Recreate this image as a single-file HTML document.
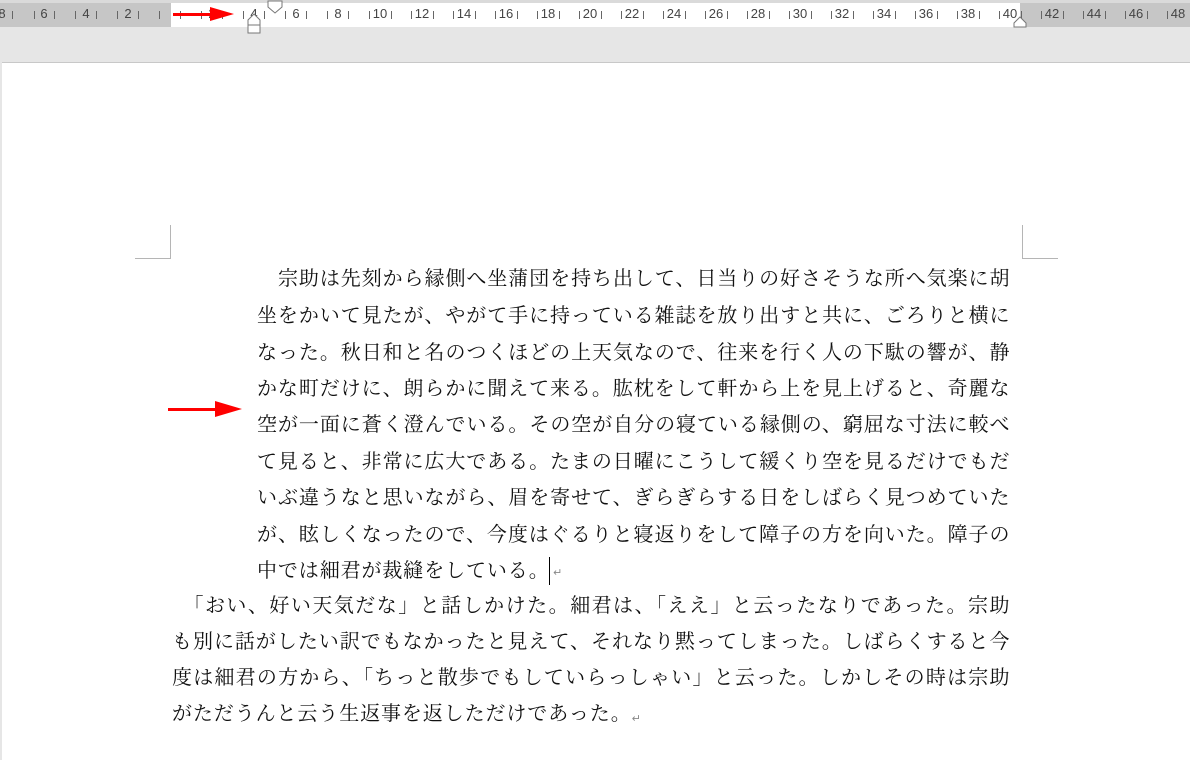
<!DOCTYPE html><html><head><meta charset="utf-8"><style>
body{margin:0;width:1190px;height:759px;overflow:hidden;background:#e6e6e6;position:relative;font-family:"Liberation Serif","Noto Serif CJK JP",serif}
.rl{position:absolute;top:3px;height:24px}
.n{position:absolute;top:6px;font:13px "Liberation Sans",sans-serif;color:#444;transform:translateX(-50%)}
.t{position:absolute;top:11px;width:1px;height:8px;background:#666}
#page{position:absolute;left:2px;top:62px;width:1188px;height:697px;background:#fff;border-top:1px solid #c8c8c8}
.l{position:absolute;font-size:20px;line-height:24px;height:24px;white-space:nowrap;text-align:justify;text-align-last:justify;color:#111;letter-spacing:0.5px}
.p1{left:257px;width:753px}.p2{left:172px;width:838px}
.cm{position:absolute;background:#b5b5b5}
</style></head><body>
<div style="position:absolute;left:0;top:0;width:1190px;height:3px;background:#dadada"></div>
<div class="rl" style="left:0;width:171px;background:#c6c6c6"></div>
<div class="rl" style="left:171px;width:849px;background:#fff"></div>
<div class="rl" style="left:1020px;width:170px;background:#c6c6c6"></div>
<div style="position:absolute;left:0;top:0">
<span class="n" style="left:2px">8</span><span class="n" style="left:44px">6</span><span class="n" style="left:86px">4</span><span class="n" style="left:128px">2</span><span class="n" style="left:212px">2</span><span class="n" style="left:254px">4</span><span class="n" style="left:296px">6</span><span class="n" style="left:338px">8</span><span class="n" style="left:380px">10</span><span class="n" style="left:422px">12</span><span class="n" style="left:464px">14</span><span class="n" style="left:506px">16</span><span class="n" style="left:548px">18</span><span class="n" style="left:590px">20</span><span class="n" style="left:632px">22</span><span class="n" style="left:674px">24</span><span class="n" style="left:716px">26</span><span class="n" style="left:758px">28</span><span class="n" style="left:800px">30</span><span class="n" style="left:842px">32</span><span class="n" style="left:884px">34</span><span class="n" style="left:926px">36</span><span class="n" style="left:968px">38</span><span class="n" style="left:1010px">40</span><span class="n" style="left:1052px">42</span><span class="n" style="left:1094px">44</span><span class="n" style="left:1136px">46</span><span class="n" style="left:1178px">48</span>
<i class="t" style="left:12px"></i><i class="t" style="left:34px"></i><i class="t" style="left:54px"></i><i class="t" style="left:75px"></i><i class="t" style="left:96px"></i><i class="t" style="left:117px"></i><i class="t" style="left:138px"></i><i class="t" style="left:159px"></i><i class="t" style="left:180px"></i><i class="t" style="left:201px"></i><i class="t" style="left:222px"></i><i class="t" style="left:243px"></i><i class="t" style="left:264px"></i><i class="t" style="left:285px"></i><i class="t" style="left:306px"></i><i class="t" style="left:327px"></i><i class="t" style="left:348px"></i><i class="t" style="left:369px"></i><i class="t" style="left:391px"></i><i class="t" style="left:411px"></i><i class="t" style="left:433px"></i><i class="t" style="left:453px"></i><i class="t" style="left:475px"></i><i class="t" style="left:495px"></i><i class="t" style="left:517px"></i><i class="t" style="left:537px"></i><i class="t" style="left:559px"></i><i class="t" style="left:579px"></i><i class="t" style="left:601px"></i><i class="t" style="left:621px"></i><i class="t" style="left:643px"></i><i class="t" style="left:663px"></i><i class="t" style="left:685px"></i><i class="t" style="left:705px"></i><i class="t" style="left:727px"></i><i class="t" style="left:747px"></i><i class="t" style="left:769px"></i><i class="t" style="left:789px"></i><i class="t" style="left:811px"></i><i class="t" style="left:831px"></i><i class="t" style="left:853px"></i><i class="t" style="left:873px"></i><i class="t" style="left:895px"></i><i class="t" style="left:915px"></i><i class="t" style="left:937px"></i><i class="t" style="left:957px"></i><i class="t" style="left:979px"></i><i class="t" style="left:999px"></i><i class="t" style="left:1021px"></i><i class="t" style="left:1041px"></i><i class="t" style="left:1063px"></i><i class="t" style="left:1083px"></i><i class="t" style="left:1105px"></i><i class="t" style="left:1125px"></i><i class="t" style="left:1147px"></i><i class="t" style="left:1167px"></i>
</div>
<svg style="position:absolute;left:0;top:0" width="1190" height="40">
<path d="M268 1h14v6l-7 6l-7-6z" fill="#fff" stroke="#777"/>
<path d="M248 25v-5l6-6l6 6v5z M248 25h12v8h-12z" fill="#fff" stroke="#777"/>
<path d="M1014 27v-4l6-6l6 6v4z" fill="#fff" stroke="#777"/>
<path d="M173 13h40v3h-40z M210 7l24 7l-24 7z" fill="#f00"/>
</svg>
<div id="page"></div>
<div class="cm" style="left:170px;top:225px;width:1px;height:34px"></div>
<div class="cm" style="left:135px;top:258px;width:36px;height:1px"></div>
<div class="cm" style="left:1022px;top:225px;width:1px;height:34px"></div>
<div class="cm" style="left:1022px;top:258px;width:36px;height:1px"></div>
<svg style="position:absolute;left:160px;top:395px" width="90" height="30"><path d="M8 13h50v3h-50z M55 6l27 8l-27 8z" fill="#f00"/></svg>
<div class="l p1" style="top:267px">　宗助は先刻から縁側へ坐蒲団を持ち出して、日当りの好さそうな所へ気楽に胡</div>
<div class="l p1" style="top:304px">坐をかいて見たが、やがて手に持っている雑誌を放り出すと共に、ごろりと横に</div>
<div class="l p1" style="top:341px">なった。秋日和と名のつくほどの上天気なので、往来を行く人の下駄の響が、静</div>
<div class="l p1" style="top:377px">かな町だけに、朗らかに聞えて来る。肱枕をして軒から上を見上げると、奇麗な</div>
<div class="l p1" style="top:413px">空が一面に蒼く澄んでいる。その空が自分の寝ている縁側の、窮屈な寸法に較べ</div>
<div class="l p1" style="top:450px">て見ると、非常に広大である。たまの日曜にこうして緩くり空を見るだけでもだ</div>
<div class="l p1" style="top:486px">いぶ違うなと思いながら、眉を寄せて、ぎらぎらする日をしばらく見つめていた</div>
<div class="l p1" style="top:523px">が、眩しくなったので、今度はぐるりと寝返りをして障子の方を向いた。障子の</div>
<div class="l" style="top:559px;left:257px;text-align-last:left;letter-spacing:0.9px">中では細君が裁縫をしている。</div>
<div style="position:absolute;left:549px;top:557px;width:1px;height:28px;background:#000"></div>
<div style="position:absolute;left:553px;top:566px;font:11px 'DejaVu Sans',sans-serif;color:#888">↵</div>
<div class="l p2" style="top:594px">　「おい、好い天気だな」と話しかけた。細君は、「ええ」と云ったなりであった。宗助</div>
<div class="l p2" style="top:630px">も別に話がしたい訳でもなかったと見えて、それなり黙ってしまった。しばらくすると今</div>
<div class="l p2" style="top:666px">度は細君の方から、「ちっと散歩でもしていらっしゃい」と云った。しかしその時は宗助</div>
<div class="l" style="top:702px;left:172px;text-align-last:left;letter-spacing:0.9px">がただうんと云う生返事を返しただけであった。<span style="font:11px 'DejaVu Sans',sans-serif;color:#888;vertical-align:-2px">↵</span></div>
</body></html>
